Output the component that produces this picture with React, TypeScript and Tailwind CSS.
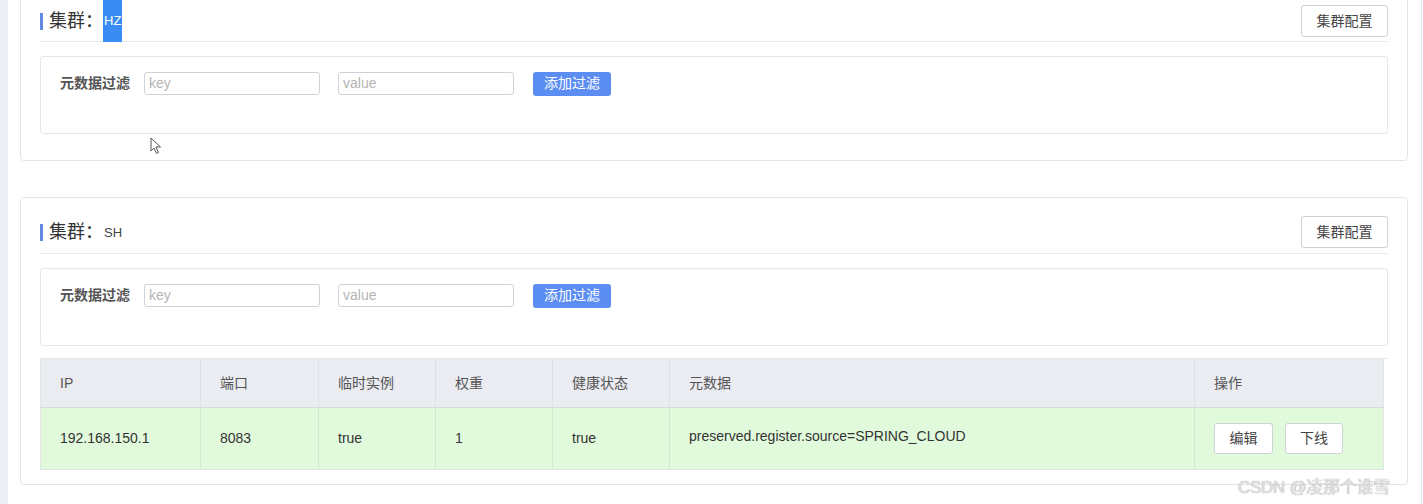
import React from "react";

const FONT = { fontFamily: '"Liberation Sans", "Noto Sans CJK SC", sans-serif' };

function FilterBox() {
  return (
    <div className="border border-[#e4e6eb] rounded-[3px] h-[78px] pl-[19px] pt-[15px]">
      <div className="flex items-center h-[23px]">
        <span className="text-[14px] font-bold text-[#555] w-[84px]">元数据过滤</span>
        <div className="w-[176px] h-[23px] border border-[#cfd2d8] rounded-[3px] flex items-center px-[4px] text-[14px] text-[#b5b5b5]">key</div>
        <div className="ml-[18px] w-[176px] h-[23px] border border-[#cfd2d8] rounded-[3px] flex items-center px-[4px] text-[14px] text-[#b5b5b5]">value</div>
        <button className="ml-[19px] w-[78px] h-[24px] rounded-[3px] bg-[#5b8df2] text-white text-[14px] flex items-center justify-center">添加过滤</button>
      </div>
    </div>
  );
}

function Header({ name, selected }: { name: string; selected?: boolean }) {
  return (
    <div className={`flex items-center justify-between border-b border-[#e8e9ec] ${selected ? "pb-[4px]" : "pb-[5px]"}`}>
      <div className="flex items-center h-[32px]">
        <span className="w-[3px] h-[17px] bg-[#6389e0] mr-[6px]" />
        <span className="text-[18px] text-[#333]">集群：</span>
        {selected ? (
          <span className="h-[42px] my-[-5px] px-[1px] bg-[#3a8cf5] text-white text-[13px] flex items-center">{name}</span>
        ) : (
          <span className="ml-[1px] text-[13px] text-[#444] mt-[1px]">{name}</span>
        )}
      </div>
      <button className="h-[32px] w-[87px] border border-[#cfd2d8] rounded-[3px] bg-white text-[14px] text-[#444]">集群配置</button>
    </div>
  );
}

const cols = [
  { t: "IP", w: 160 },
  { t: "端口", w: 118 },
  { t: "临时实例", w: 117 },
  { t: "权重", w: 117 },
  { t: "健康状态", w: 117 },
  { t: "元数据", w: 525 },
  { t: "操作", w: 188 },
];

function Table() {
  const vals = ["192.168.150.1", "8083", "true", "1", "true"];
  return (
    <div className="mt-[12px] border-t border-[#e4e6eb]">
      <div className="w-[1344px] border border-[#e2e4e8] border-t-0">
        <div className="flex bg-[#eaecf1] h-[48px]">
          {cols.map((c, i) => (
            <div
              key={i}
              className={`shrink-0 flex items-center pl-[19px] text-[14px] text-[#555] ${i < cols.length - 1 ? "border-r border-[#dcdfe5]" : ""}`}
              style={{ width: c.w }}
            >
              {c.t}
            </div>
          ))}
        </div>
        <div className="flex bg-[#e2fadc] h-[62px] border-t border-[#d8dcd6]">
          {vals.map((v, i) => (
            <div
              key={i}
              className="shrink-0 flex items-center pl-[19px] text-[14px] text-[#333] border-r border-[#d3e6cf]"
              style={{ width: cols[i].w }}
            >
              {v}
            </div>
          ))}
          <div className="shrink-0 pl-[19px] pt-[18px] text-[14px] text-[#333] border-r border-[#d3e6cf]" style={{ width: 525 }}>
            preserved.register.source=SPRING_CLOUD
          </div>
          <div className="shrink-0 flex items-center pl-[19px] gap-[12px]" style={{ width: 188 }}>
            <button className="w-[59px] h-[31px] bg-white border border-[#cfd2d8] rounded-[3px] text-[14px] text-[#444]">编辑</button>
            <button className="w-[58px] h-[31px] bg-white border border-[#cfd2d8] rounded-[3px] text-[14px] text-[#444]">下线</button>
          </div>
        </div>
      </div>
    </div>
  );
}

export default function App() {
  return (
    <div className="relative w-[1423px] h-[504px] overflow-hidden bg-white flex" style={FONT}>
      <div className="w-[8px] bg-[#eceef4] shrink-0" />
      <div className="flex-1 pl-[12px] pr-[13px]">
        <div className="mt-[-15px] border border-[#e2e4e8] rounded-[4px] pt-[19px] px-[19px] pb-[26px]">
          <Header name="HZ" selected />
          <div className="mt-[14px]">
            <FilterBox />
          </div>
        </div>
        <div className="mt-[36px] border border-[#e2e4e8] rounded-[4px] pt-[18px] px-[19px] pb-[14px]">
          <Header name="SH" />
          <div className="mt-[14px]">
            <FilterBox />
          </div>
          <Table />
        </div>
      </div>
      <div className="w-[2px] border-l border-[#e6e7ea] shrink-0" />

      <svg className="absolute left-[150px] top-[137px]" width="13" height="18" viewBox="0 0 13 18">
        <path d="M1 1 L1 14 L4 11 L6.5 16.5 L8.5 15.5 L6 10 L10.5 10 Z" fill="white" stroke="#555" strokeWidth="1" strokeLinejoin="round" />
      </svg>

      <div
        className="absolute left-[1238px] top-[475px] text-[17px] text-[#e4e4e4] tracking-[-0.3px]"
        style={{ textShadow: "0 0 1px #8a8a8a" }}
      >
        CSDN @凌那个谁雪
      </div>
    </div>
  );
}
